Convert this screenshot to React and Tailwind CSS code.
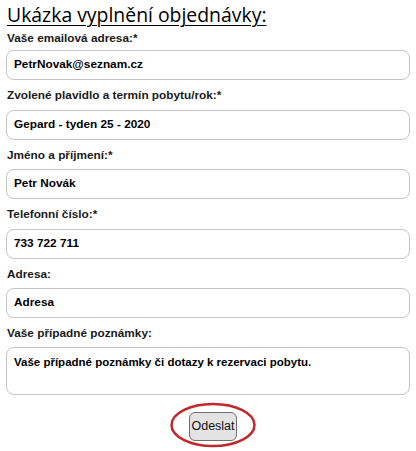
import React from 'react';

const fields = [
  { label: 'Vaše emailová adresa:*', value: 'PetrNovak@seznam.cz' },
  { label: 'Zvolené plavidlo a termín pobytu/rok:*', value: 'Gepard - tyden 25 - 2020' },
  { label: 'Jméno a příjmení:*', value: 'Petr Novák' },
  { label: 'Telefonní číslo:*', value: '733 722 711' },
  { label: 'Adresa:', value: 'Adresa' },
];

export default function App() {
  return (
    <div className="w-[416px] h-[451px] bg-white px-[6px] text-black font-['Liberation_Sans',Arial,sans-serif]">
      <h2 className="pl-[1px] pt-[1px] text-[19.4px] leading-[27px] underline underline-offset-[3px] decoration-[1px] font-['Open_Sans','Noto_Sans',sans-serif]">
        Ukázka vyplnění objednávky:
      </h2>
      {fields.map((f, i) => (
        <div key={i}>
          <div className={`pl-[1px] text-[11.8px] font-bold leading-[16px] text-[#1a1a1a] ${i === 0 ? 'pt-[2px] pb-[4px]' : 'pt-[7px] pb-[6.5px]'}`}>
            {f.label}
          </div>
          <div className="h-[30px] w-[404px] rounded-[8px] border border-[#c4c4c4] flex items-center pl-[7px] text-[11.8px] font-bold">
            {f.value}
          </div>
        </div>
      ))}
      <div className="pl-[1px] pt-[7px] pb-[6px] text-[11.8px] font-bold leading-[16px] text-[#1a1a1a]">
        Vaše případné poznámky:
      </div>
      <div className="h-[48px] w-[404px] rounded-[8px] border border-[#c4c4c4] pl-[7px] pt-[6px] text-[11.5px] font-bold leading-[16px]">
        Vaše případné poznámky či dotazy k rezervaci pobytu.
      </div>
      <div className="flex justify-center pt-[17px] pl-[10px]">
        <div className="relative">
          <button className="h-[29px] w-[48px] rounded-[6px] border border-[#6e6e6e] bg-[#e3e3e3] text-[12.5px] text-[#111] font-['Liberation_Sans',Arial,sans-serif]">
            Odeslat
          </button>
          <svg className="absolute left-[-20px] top-[-10px]" width="88" height="46" viewBox="0 0 88 46">
            <ellipse cx="44" cy="23" rx="41.5" ry="21" fill="none" stroke="#c1272d" strokeWidth="2.5" />
          </svg>
        </div>
      </div>
    </div>
  );
}
